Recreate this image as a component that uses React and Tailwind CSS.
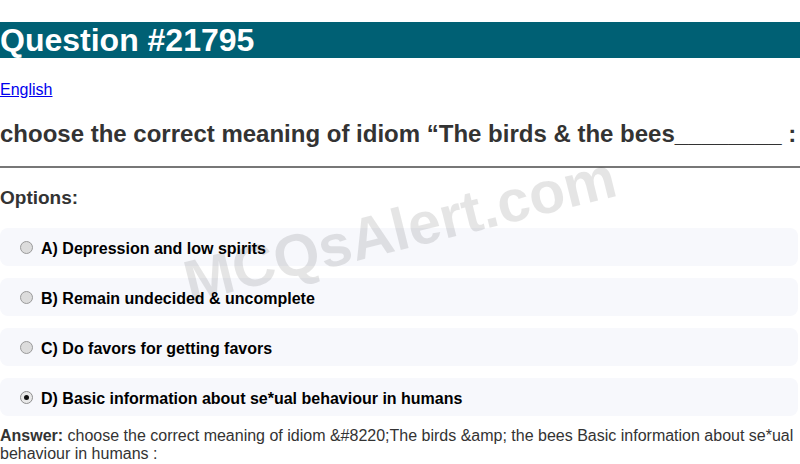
import React from "react"

const options = [
  { label: "A) Depression and low spirits", checked: false },
  { label: "B) Remain undecided & uncomplete", checked: false },
  { label: "C) Do favors for getting favors", checked: false },
  { label: "D) Basic information about se*ual behaviour in humans", checked: true },
]

function Radio({ checked }) {
  if (checked) {
    return (
      <span className="flex h-[13px] w-[13px] shrink-0 items-center justify-center rounded-full border border-[#8f8f8f] bg-[#e9e9e9]">
        <span className="h-[5px] w-[5px] rounded-full bg-[#111]" />
      </span>
    )
  }
  return <span className="h-[13px] w-[13px] shrink-0 rounded-full border border-[#9a9a9a] bg-[#dcdcdc]" />
}

export default function App() {
  return (
    <div className="relative min-h-[464px] overflow-hidden bg-white pt-[22px] font-['Liberation_Sans',Arial,sans-serif]">
      <h1 className="h-[36px] bg-[#006074] text-[32px] font-bold leading-[36px] text-white">Question #21795</h1>

      <a href="#" className="mt-[23px] block text-base leading-[18px] text-[#0000ee] underline">
        English
      </a>

      <h2 className="mt-[21px] whitespace-nowrap text-[24px] font-bold leading-[28px] text-[#333]">
        choose the correct meaning of idiom “The birds &amp; the bees________ :
      </h2>

      <hr className="mt-[18px] border-0 border-t-2 border-[#777]" />

      <div className="mt-[19px] text-[19px] font-bold leading-[22px] text-[#333]">Options:</div>

      <div className="mt-[19px] flex flex-col gap-[12px]">
        {options.map((o) => (
          <div key={o.label} className="mr-[2px] flex h-[38px] items-center gap-[8px] rounded-[8px] bg-[#f7f8fc] pl-[20px]">
            <Radio checked={o.checked} />
            <span className="mt-[3px] text-base font-bold text-black">{o.label}</span>
          </div>
        ))}
      </div>

      <p className="mt-[11px] text-base leading-[18px] text-[#333]">
        <b>Answer:</b> choose the correct meaning of idiom &amp;#8220;The birds &amp;amp; the bees Basic information about se*ual behaviour in humans :
      </p>

      <div className="pointer-events-none absolute left-[400px] top-[230px] -translate-x-1/2 -translate-y-1/2 -rotate-[14deg] whitespace-nowrap text-[59px] font-bold leading-none text-black/10">
        MCQsAlert.com
      </div>
    </div>
  )
}
